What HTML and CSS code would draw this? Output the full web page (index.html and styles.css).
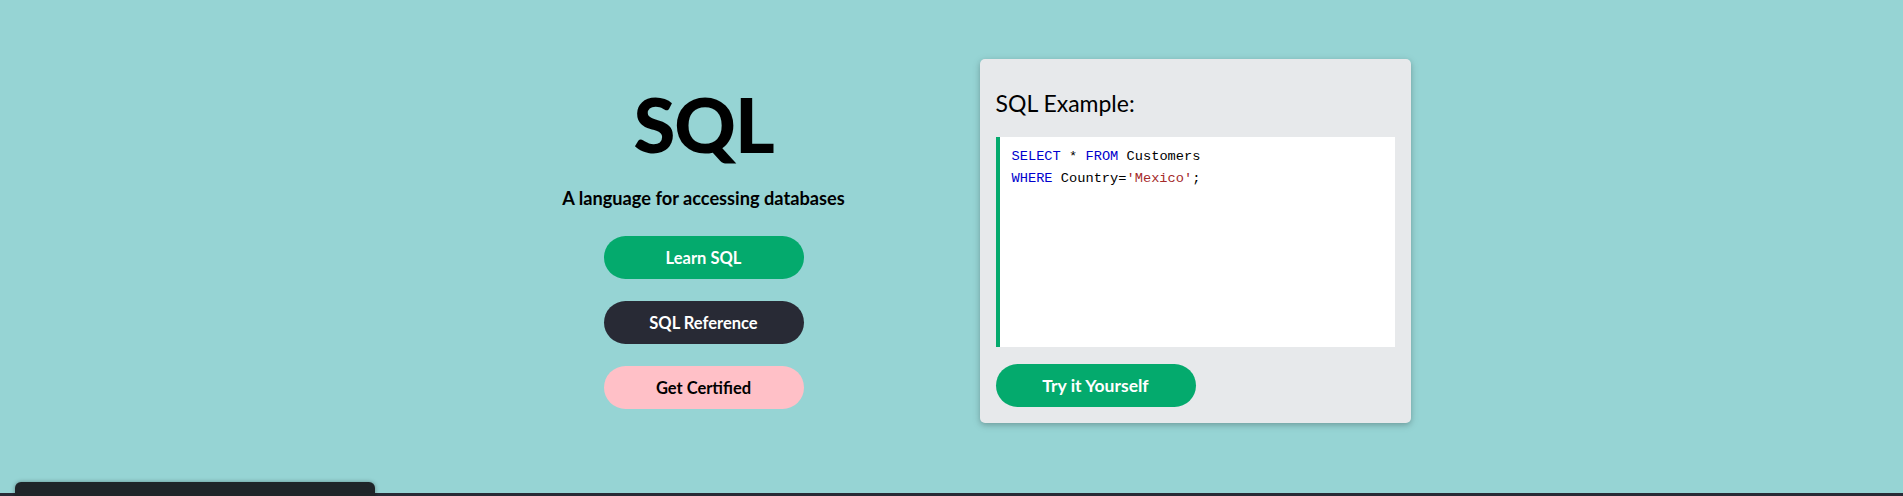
FILE: index.html
```html
<!DOCTYPE html>
<html lang="en">
<head>
<meta charset="utf-8">
<title>SQL Tutorial</title>
<link rel="stylesheet" href="styles.css">
</head>
<body>
<section class="hero">
  <div class="hero-inner">
    <div class="hero-left">
      <h1 class="hero-title">SQL</h1>
      <p class="hero-sub">A language for accessing databases</p>
      <a class="pill pill-green" href="#">Learn SQL</a>
      <a class="pill pill-dark" href="#">SQL Reference</a>
      <a class="pill pill-pink" href="#">Get Certified</a>
    </div>
    <div class="hero-right">
      <div class="example-card">
        <h3 class="example-title">SQL Example:</h3>
        <div class="code-box"><span class="kw">SELECT</span> * <span class="kw">FROM</span> Customers<br><span class="kw">WHERE</span> Country=<span class="str">'Mexico'</span>;</div>
        <a class="pill pill-green pill-try" href="#">Try it Yourself</a>
      </div>
    </div>
  </div>
</section>
<section class="dark-band"></section>
<div class="floating-box"></div>
</body>
</html>
```
FILE: styles.css
```css
html, body {
  margin: 0;
  padding: 0;
}
body {
  font-family: Lato, "Open Sans", sans-serif;
  background: #282A35;
  color: #000;
  overflow: hidden;
}
.hero {
  background: #96D4D4;
  height: 493px;
}
.hero-inner {
  width: 992px;
  margin: 0 auto;
  display: flex;
}
.hero-left {
  width: 496px;
  display: flex;
  flex-direction: column;
  align-items: center;
  padding-top: 84px;
}
.hero-title {
  font-size: 76px;
  font-weight: 900;
  line-height: 80px;
  margin: 0;
  letter-spacing: -1px;
}
.hero-sub {
  font-size: 18.2px;
  font-weight: 700;
  margin: 22px 0 26px;
  line-height: 24px;
}
.pill {
  display: flex;
  align-items: center;
  justify-content: center;
  width: 200px;
  height: 43px;
  border-radius: 22px;
  font-size: 16.5px;
  font-weight: 700;
  text-decoration: none;
  box-sizing: border-box;
  margin-bottom: 22px;
}
.pill-green {
  background: #04AA6D;
  color: #fff;
}
.pill-dark {
  background: #282A35;
  color: #fff;
}
.pill-pink {
  background: #FFC0C7;
  color: #000;
}
.hero-right {
  width: 496px;
  padding-top: 59px;
  padding-left: 28px;
  box-sizing: border-box;
}
.example-card {
  width: 431px;
  background: #E7E9EB;
  border-radius: 5px;
  padding: 16px;
  box-sizing: border-box;
  box-shadow: 0 2px 5px rgba(0,0,0,0.16), 0 2px 10px rgba(0,0,0,0.12);
}
.example-title {
  font-size: 23px;
  font-weight: 400;
  margin: 13px 0 19px;
  line-height: 30px;
}
.code-box {
  background: #fff;
  border-left: 4px solid #04AA6D;
  height: 210px;
  box-sizing: border-box;
  padding: 9px 12px;
  font-family: "Liberation Mono", "DejaVu Sans Mono", monospace;
  font-size: 13.7px;
  line-height: 22px;
  color: #000;
}
.kw { color: mediumblue; }
.str { color: brown; }
.pill-try {
  margin: 17px 0 0;
  font-size: 17.5px;
}
.dark-band {
  height: 3px;
}
.floating-box {
  position: fixed;
  left: 15px;
  top: 482px;
  width: 360px;
  height: 40px;
  background: #1F2428;
  border-radius: 6px;
  box-shadow: 0 0 4px rgba(0,0,0,0.35);
}
```
